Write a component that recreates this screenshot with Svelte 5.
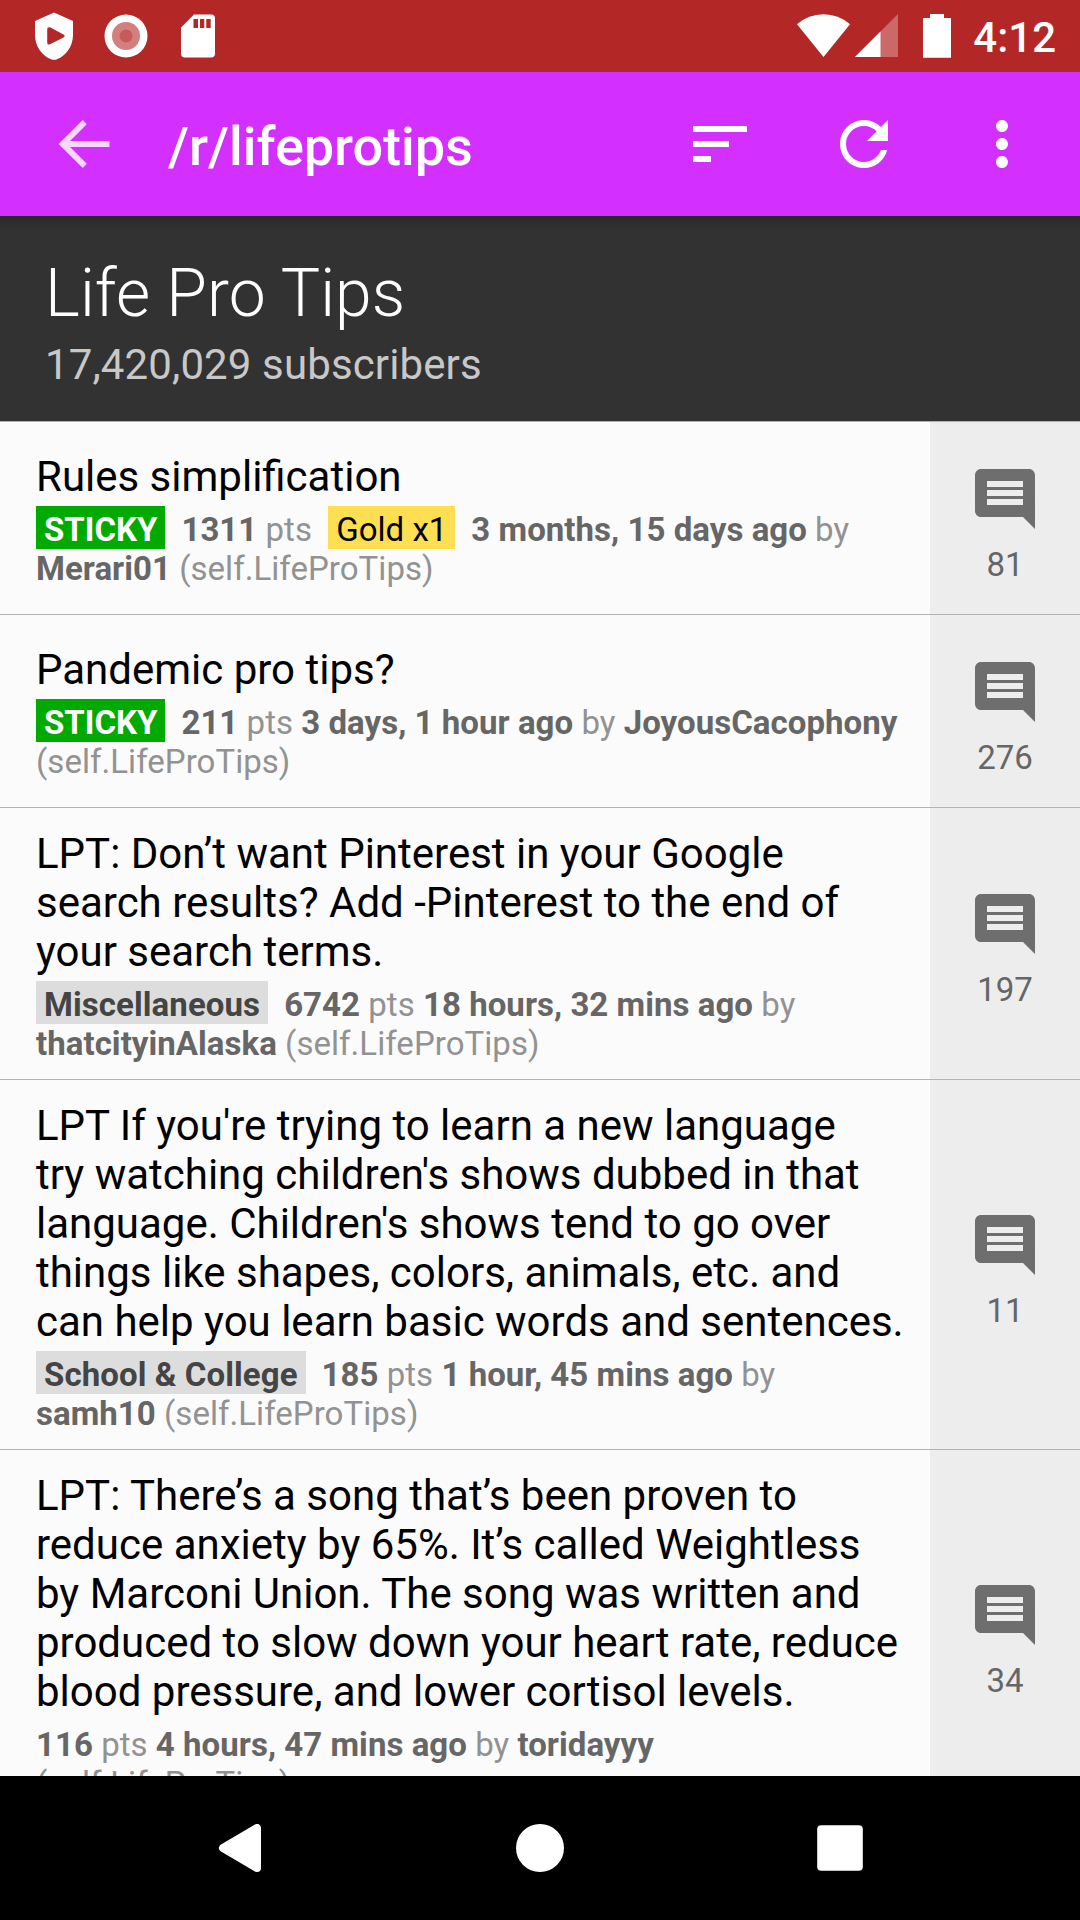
<script>
  const posts = [
    {
      title: ['Rules simplification'],
      flair: { text: 'STICKY', kind: 'sticky' },
      points: '1311',
      gold: 'Gold x1',
      age: '3 months, 15 days ago',
      author: 'Merari01',
      authorBelow: true,
      comments: 81
    },
    {
      title: ['Pandemic pro tips?'],
      flair: { text: 'STICKY', kind: 'sticky' },
      points: '211',
      age: '3 days, 1 hour ago',
      author: 'JoyousCacophony',
      comments: 276
    },
    {
      title: [
        'LPT: Don’t want Pinterest in your Google',
        'search results? Add -Pinterest to the end of',
        'your search terms.'
      ],
      flair: { text: 'Miscellaneous', kind: 'topic' },
      points: '6742',
      age: '18 hours, 32 mins ago',
      author: 'thatcityinAlaska',
      authorBelow: true,
      comments: 197
    },
    {
      title: [
        "LPT If you're trying to learn a new language",
        "try watching children's shows dubbed in that",
        "language. Children's shows tend to go over",
        'things like shapes, colors, animals, etc. and',
        'can help you learn basic words and sentences.'
      ],
      flair: { text: 'School & College', kind: 'topic' },
      points: '185',
      age: '1 hour, 45 mins ago',
      author: 'samh10',
      authorBelow: true,
      comments: 11
    },
    {
      title: [
        'LPT: There’s a song that’s been proven to',
        'reduce anxiety by 65%. It’s called Weightless',
        'by Marconi Union. The song was written and',
        'produced to slow down your heart rate, reduce',
        'blood pressure, and lower cortisol levels.'
      ],
      points: '116',
      age: '4 hours, 47 mins ago',
      author: 'toridayyy',
      comments: 34
    }
  ];
</script>

<div class="screen">
  <div class="status">
    <svg class="shield" width="38" height="48" viewBox="0 0 38 48">
      <path fill="#fff" fill-rule="evenodd" d="M19 .5 38 9V23C38 34 31 44 22 47.2Q19 48.2 16 47.2C7 44 0 34 0 23V9ZM12.2 17.5V30.500Q12.200 33.500 15 32.200L28.500 25.600Q30.800 24 28.500 22.400L15 15.300Q12.200 14.500 12.200 17.500Z" />
    </svg>
    <svg class="record" width="44" height="44" viewBox="0 0 44 44">
      <circle cx="22" cy="22" r="21.5" fill="#fff" />
      <circle cx="22" cy="22" r="14" fill="#d47f7f" />
      <circle cx="22" cy="22" r="6.500" fill="#c75a5a" />
    </svg>
    <svg width="34" height="44" viewBox="0 0 34 44">
      <path fill="#fff" fill-rule="evenodd" d="M13 .5H30Q34 .5 34 4.500V39.500Q34 43.500 30 43.500H4Q0 43.500 0 39.500V13.500ZM12.500 5V14H17V5ZM19 5V14H23.300V5ZM25.300 5V14H29.700V5Z" />
    </svg>
    <div class="spacer"></div>
    <svg class="wifi" width="53" height="44" viewBox="0 0 53 44">
      <path fill="#fff" d="M0 10.200Q11.500 .2 26.500 .2T53 10.200L26.500 43Z" />
    </svg>
    <svg class="signal" width="43" height="44" viewBox="0 0 43 44">
      <path fill="#fff" fill-opacity=".31" d="M43 0V43H0Z" />
      <path fill="#fff" d="M25.500 17.500V43H0Z" />
    </svg>
    <svg class="battery" width="28" height="44" viewBox="0 0 28 44">
      <path fill="#fff" d="M7 0H21V4H28V43.800H0V4H7Z" />
    </svg>
    <span class="clock">4:12</span>
  </div>

  <div class="toolbar">
    <svg class="back" width="52" height="50" viewBox="58 119 52 50">
      <path fill="#f7d6ff" d="M109.500 141H70L86.800 124.300 82.800 120 58.500 144 82.800 168 86.800 163.700 70 147H109.500Z" />
    </svg>
    <h1>/r/lifeprotips</h1>
    <svg class="sort" width="72" height="72" viewBox="0 0 24 24">
      <path fill="#fff" d="M3 18h6v-2H3v2zM3 6v2h18V6H3zm0 7h12v-2H3v2z" />
    </svg>
    <svg class="refresh" width="72" height="72" viewBox="0 0 24 24">
      <path fill="#fff" d="M17.650 6.350C16.200 4.900 14.210 4 12 4c-4.420 0-7.990 3.580-7.990 8s3.570 8 7.990 8c3.730 0 6.840-2.550 7.730-6h-2.080c-.82 2.330-3.040 4-5.650 4-3.310 0-6-2.690-6-6s2.690-6 6-6c1.660 0 3.140.69 4.220 1.780L13 11h7V4l-2.350 2.350z" />
    </svg>
    <svg width="72" height="72" viewBox="0 0 24 24">
      <path fill="#fff" d="M12 8c1.100 0 2-.9 2-2s-.9-2-2-2-2 .9-2 2 .9 2 2 2zm0 2c-1.100 0-2 .9-2 2s.9 2 2 2 2-.9 2-2-.9-2-2-2zm0 6c-1.100 0-2 .9-2 2s.9 2 2 2 2-.9 2-2-.9-2-2-2z" />
    </svg>
  </div>

  <header class="about">
    <h2>Life Pro Tips</h2>
    <p>17,420,029 subscribers</p>
  </header>

  <main class="list">
    {#each posts as post}
      <article class="post">
        <div class="body">
          <h3>{#each post.title as line}<span class="line">{line}</span>{/each}</h3>
          <div class="meta">
            {#if post.flair}<span class="flair {post.flair.kind}">{post.flair.text}</span>{/if}<b>{post.points}</b> pts {#if post.gold}<span class="flair gold">{post.gold}</span>{/if}<b>{post.age}</b> by {#if post.authorBelow}<br /><b>{post.author}</b> (self.LifeProTips){:else}<b>{post.author}</b><br />(self.LifeProTips){/if}
          </div>
        </div>
        <div class="comments">
          <svg width="72" height="72" viewBox="0 0 24 24">
            <path fill="#6e6e6e" d="M21.990 4c0-1.100-.89-2-1.990-2H4c-1.100 0-2 .9-2 2v12c0 1.100.9 2 2 2h14l4 4-.01-18zM18 14H6v-2h12v2zm0-3H6V9h12v2zm0-3H6V6h12v2z" />
          </svg>
          <span>{post.comments}</span>
        </div>
      </article>
    {/each}
  </main>

  <nav>
    <svg width="48" height="48" viewBox="0 0 48 48">
      <path fill="#fff" stroke="#fff" stroke-width="8" stroke-linejoin="round" d="M41 4V44L7 24Z" />
    </svg>
    <svg width="48" height="48" viewBox="0 0 48 48"><circle cx="24" cy="24" r="24" fill="#fff" /></svg>
    <svg width="48" height="48" viewBox="0 0 48 48"><rect x="1.200" y="1.200" width="45.600" height="45.600" rx="4" fill="#fff" /></svg>
  </nav>
</div>

<style>
  :global(body) {
    margin: 0;
  }
  .screen {
    width: 1080px;
    height: 1920px;
    display: flex;
    flex-direction: column;
    overflow: hidden;
    background: #fbfbfb;
    font-family: Roboto, sans-serif;
  }
  svg {
    display: block;
    flex: none;
  }
  h1, h2, h3, p {
    margin: 0;
    font-weight: 400;
  }
  .status {
    box-sizing: border-box;
    height: 72px;
    flex: none;
    display: flex;
    align-items: center;
    padding: 0 24px 0 35px;
    background: #b42727;
  }
  .record {
    margin: 0 33px 0 31px;
  }
  .spacer {
    flex: 1;
  }
  .signal {
    margin: 0 25px 0 5px;
  }
  .clock {
    margin: 2px 0 0 22px;
    color: #fff;
    font-size: 42px;
    font-weight: 500;
    line-height: 49px;
  }
  .toolbar {
    box-sizing: border-box;
    height: 144px;
    flex: none;
    display: flex;
    align-items: center;
    padding: 0 42px 0 58px;
    background: #d32fff;
  }
  .toolbar h1 {
    flex: 1;
    margin-left: 58px;
    padding-top: 6px;
    color: #fff;
    font-size: 54px;
    font-weight: 500;
    letter-spacing: -0.05px;
    line-height: 64px;
  }
  .sort {
    margin-right: 72px;
  }
  .refresh {
    margin-right: 66px;
  }
  .about {
    box-sizing: border-box;
    height: 206px;
    flex: none;
    padding: 39px 45px 0;
    border-bottom: 1px solid #afafaf;
    background: linear-gradient(#282828, #2e2e2e 7px, #323232 15px);
  }
  .about h2 {
    color: #fff;
    font-size: 66px;
    font-weight: 300;
    letter-spacing: 0.08px;
    line-height: 77px;
  }
  .about p {
    margin-top: 8px;
    color: #c8c8c8;
    font-size: 42px;
    letter-spacing: 0.12px;
    line-height: 49px;
  }
  .list {
    flex: 1;
    min-height: 0;
    overflow: hidden;
  }
  .post {
    display: flex;
    min-height: 192px;
    border-bottom: 1px solid #b3b3b3;
  }
  .body {
    flex: 1;
    display: flex;
    flex-direction: column;
    justify-content: center;
    padding: 20.9px 0 16.1px 36px;
  }
  h3 {
    color: #000;
    font-size: 42px;
    line-height: 49px;
  }
  .line {
    display: block;
    white-space: nowrap;
  }
  .meta {
    margin-top: 9px;
    color: #929292;
    font-size: 33px;
    letter-spacing: 0.04px;
    line-height: 39px;
    white-space: nowrap;
  }
  .meta b {
    color: #666;
    font-weight: 700;
  }
  .flair {
    margin-right: 16px;
    padding: 4px 8px 0;
    font-weight: 700;
  }
  .sticky {
    background: #00aa00;
    color: #fff;
    letter-spacing: 0;
  }
  .topic {
    background: #ddd;
    color: #444;
    letter-spacing: 0.08px;
  }
  .gold {
    margin-left: 8px;
    background: #ffdf52;
    color: #000;
    font-weight: 400;
    letter-spacing: 0;
  }
  .comments {
    box-sizing: border-box;
    width: 150px;
    flex: none;
    display: flex;
    flex-direction: column;
    align-items: center;
    justify-content: center;
    gap: 10px;
    padding-top: 10.8px;
    background: #ededed;
    color: #666;
    font-size: 33px;
    line-height: 39px;
  }
  nav {
    height: 144px;
    flex: none;
    display: flex;
    align-items: center;
    justify-content: center;
    gap: 252px;
    background: #000;
  }
</style>
